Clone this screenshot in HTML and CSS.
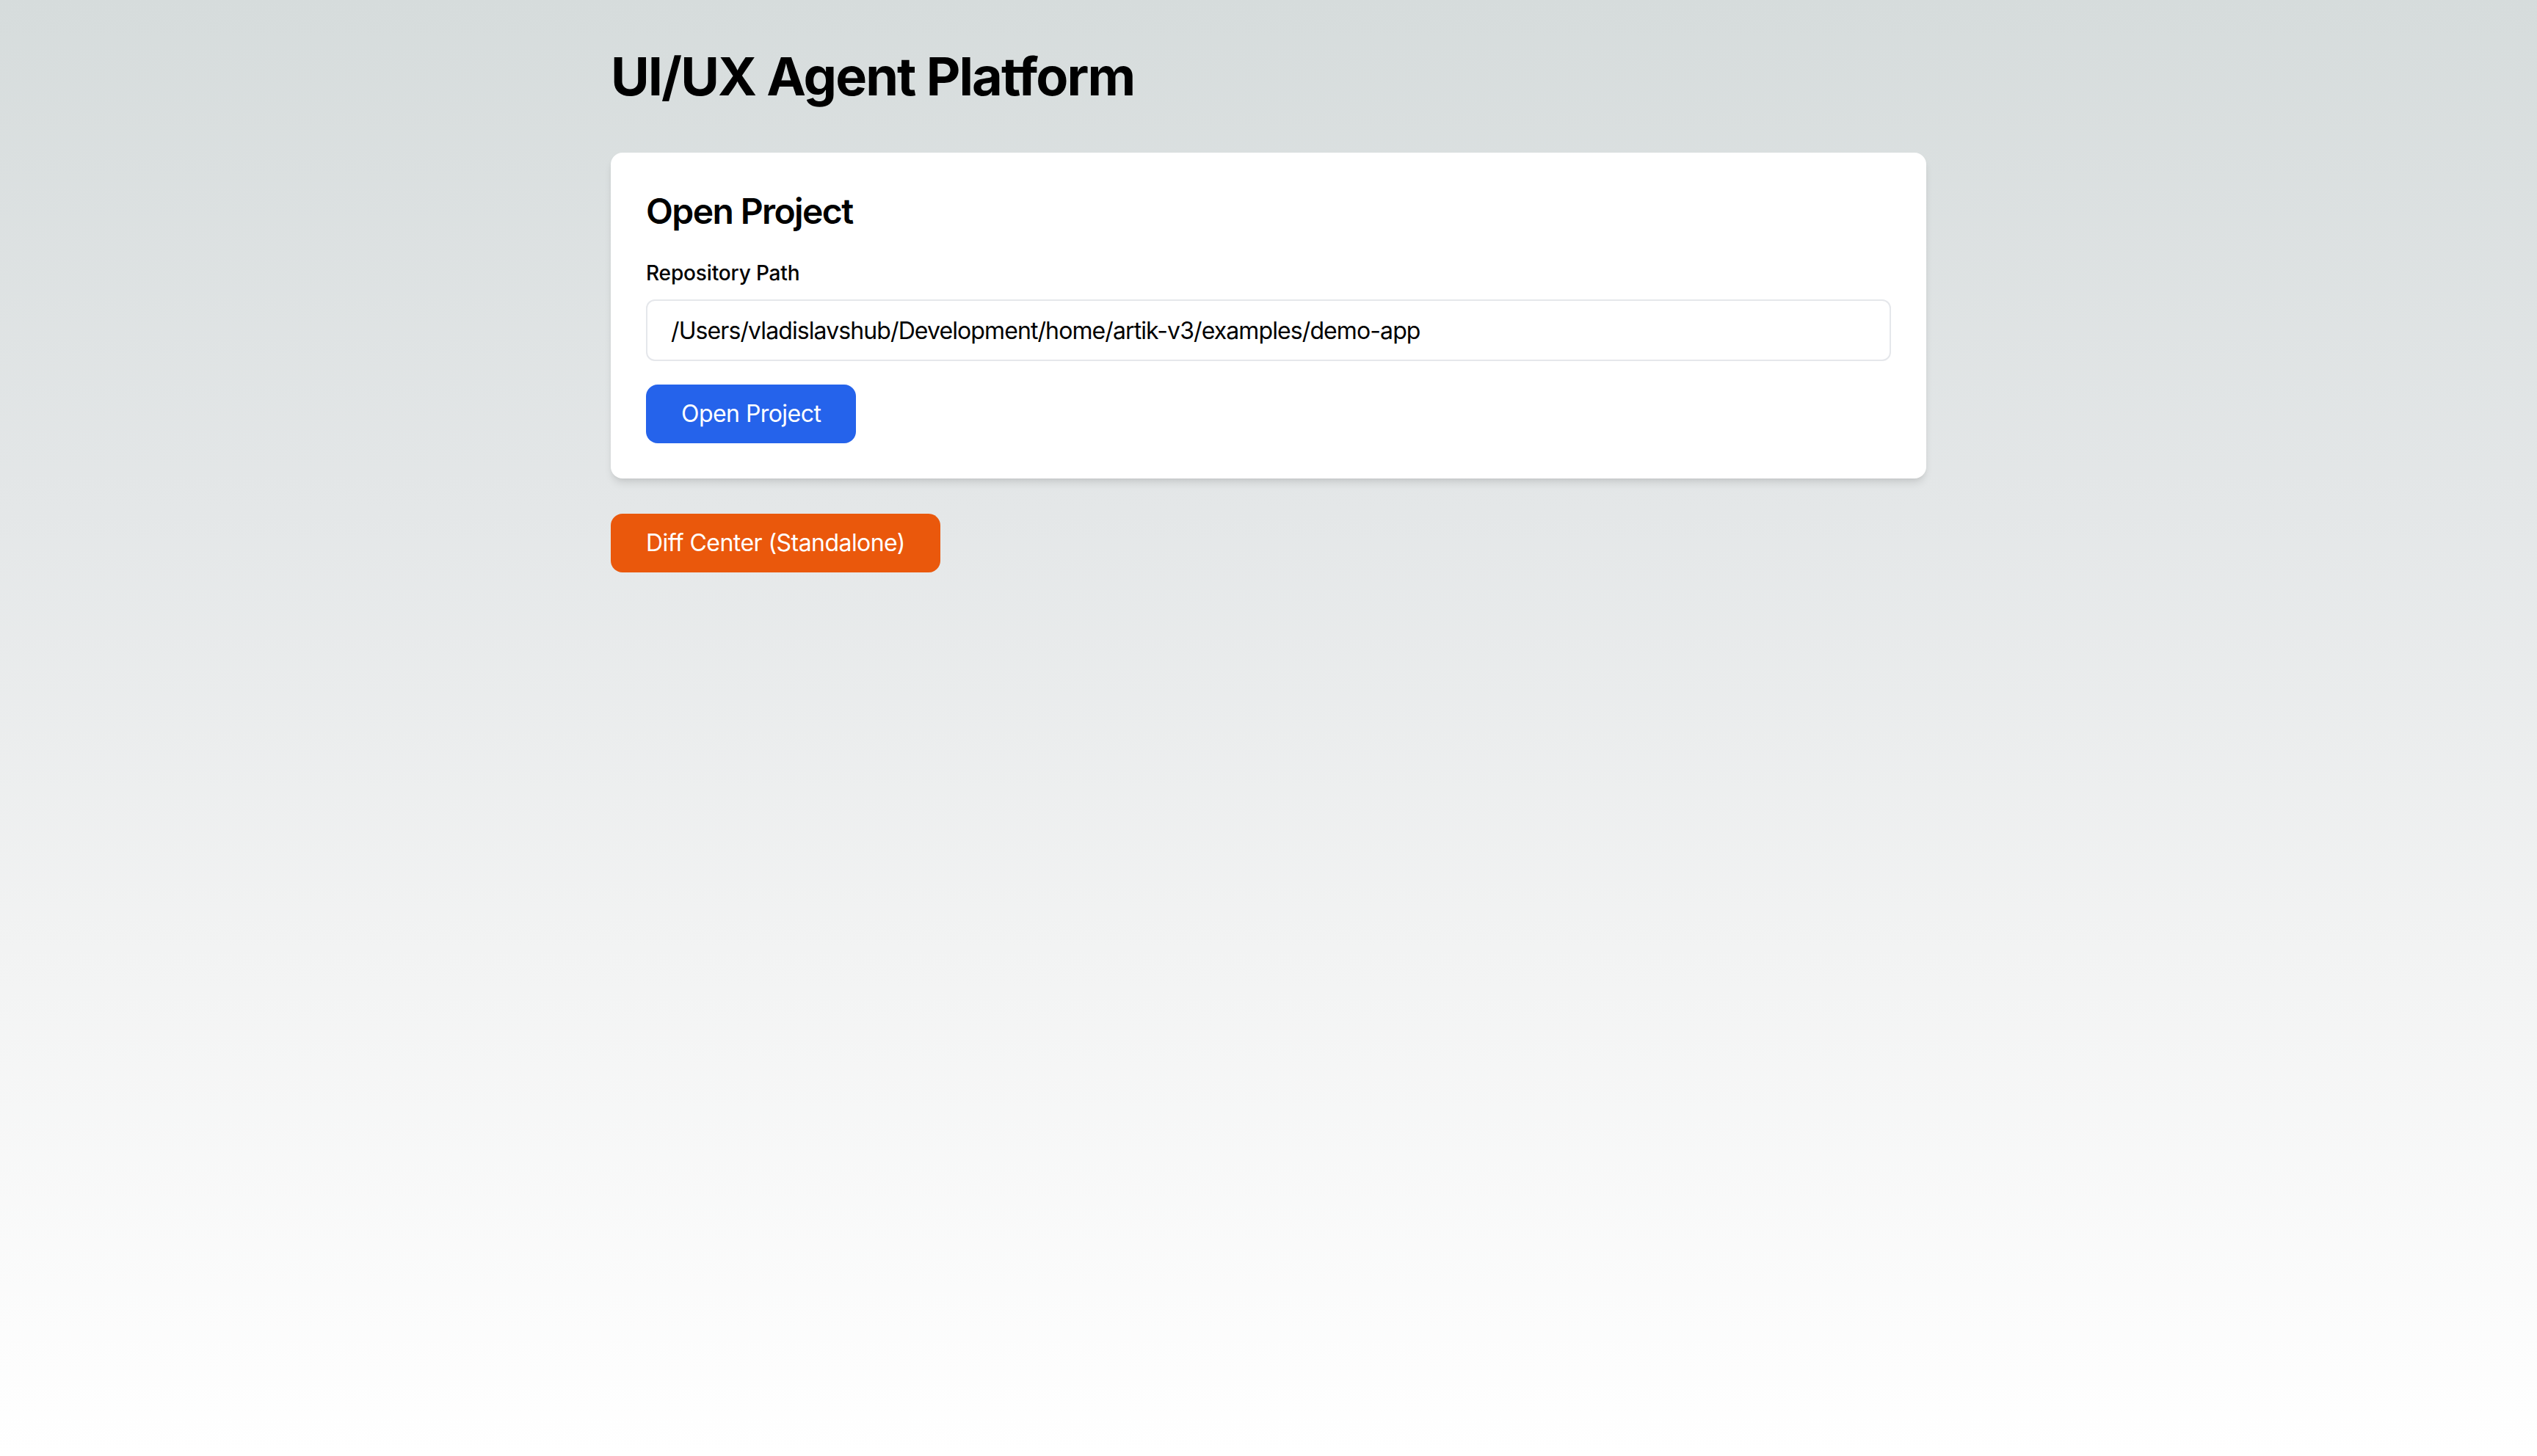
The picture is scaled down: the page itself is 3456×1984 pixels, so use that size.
FILE: index.html
```html
<!DOCTYPE html>
<html lang="en">
<head>
<meta charset="utf-8">
<title>UI/UX Agent Platform</title>
<link rel="stylesheet" href="styles.css">
</head>
<body>
<main class="page">
  <h1 class="title">UI/UX Agent Platform</h1>
  <section class="card">
    <h2 class="card-title">Open Project</h2>
    <label class="label" for="repo">Repository Path</label>
    <input class="input" id="repo" type="text" value="/Users/vladislavshub/Development/home/artik-v3/examples/demo-app">
    <button class="btn btn-blue" type="button">Open Project</button>
  </section>
  <button class="btn btn-orange" type="button">Diff Center (Standalone)</button>
</main>
</body>
</html>
```

FILE: styles.css
```css
html, body {
  margin: 0;
  padding: 0;
  min-height: 100%;
}
body {
  min-height: 1984px;
  background: linear-gradient(to bottom, #d6dcdc 0%, #e4e7e8 35%, #f2f3f3 65%, #ffffff 100%);
  font-family: Inter, "Noto Sans", "Liberation Sans", sans-serif;
  color: #000;
}
.page {
  max-width: 1792px;
  margin: 0 auto;
  padding-top: 64px;
  display: flex;
  flex-direction: column;
  align-items: flex-start;
}
.title {
  margin: 0 0 64px 0;
  font-size: 72px;
  line-height: 80px;
  font-weight: 700;
  letter-spacing: -1.9px;
}
.card {
  align-self: stretch;
  box-sizing: border-box;
  background: #fff;
  border-radius: 16px;
  padding: 48px;
  box-shadow: 0 8px 12px -2px rgba(0,0,0,0.10), 0 4px 8px -4px rgba(0,0,0,0.08);
  display: flex;
  flex-direction: column;
  align-items: flex-start;
  margin-bottom: 48px;
}
.card-title {
  margin: 0 0 32px 0;
  font-size: 48px;
  line-height: 64px;
  font-weight: 600;
  letter-spacing: -1.6px;
}
.label {
  font-size: 28px;
  line-height: 40px;
  font-weight: 500;
  margin-bottom: 16px;
  letter-spacing: -0.15px;
}
.input {
  align-self: stretch;
  box-sizing: border-box;
  height: 84px;
  padding: 16px 32px;
  border: 2px solid #e5e7eb;
  border-radius: 12px;
  font-family: inherit;
  font-size: 32px;
  line-height: 48px;
  letter-spacing: -0.9px;
  color: #000;
  background: #fff;
  margin-bottom: 32px;
  outline: none;
}
.btn {
  border: none;
  border-radius: 16px;
  padding: 16px 48px;
  font-family: inherit;
  font-size: 32px;
  line-height: 48px;
  font-weight: 400;
  letter-spacing: -0.55px;
  color: #fff;
  cursor: pointer;
}
.btn-blue {
  background: #2563eb;
}
.btn-orange {
  background: #ea580c;
}
```
